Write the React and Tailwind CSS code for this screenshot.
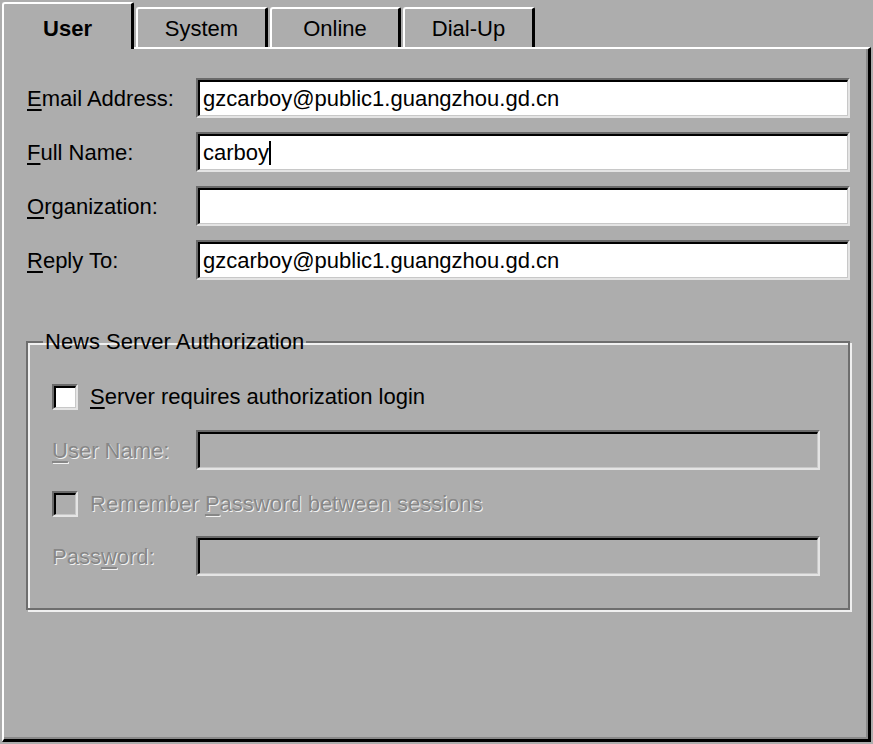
import { useState } from 'react';

const font = { fontFamily: '"Liberation Sans", Arial, sans-serif' };

// Mnemonic: underline one letter of a label
const Mn = ({ text, at = 0 }) => (
    <>
        {text.slice(0, at)}
        <span className="underline underline-offset-[3px] decoration-[1.5px]">{text[at]}</span>
        {text.slice(at + 1)}
    </>
);

const tabs = [
    { name: 'System', w: 'w-[132px]' },
    { name: 'Online', w: 'w-[131px]' },
    { name: 'Dial-Up', w: 'w-[132px]' },
];

const Field = ({ value, disabled, caret, width = 'w-[654px]' }) => (
    <div className={`${width} h-[40px] border-t-2 border-l-2 border-t-[#6a6a6a] border-l-[#6a6a6a] border-b-2 border-r-2 border-b-[#e4e4e4] border-r-[#e4e4e4]`}>
        <div className={`h-full border-t-2 border-l-2 border-t-black border-l-black border-b border-r border-b-[#c8c8c8] border-r-[#c8c8c8] flex items-center px-[3px] text-[22px] text-black ${disabled ? 'bg-[#adadad]' : 'bg-white'}`}>
            {value}
            {caret && <span className="inline-block w-[2px] h-[24px] bg-black" />}
        </div>
    </div>
);

const Check = ({ disabled }) => (
    <div className="w-[26px] h-[26px] shrink-0 border-t-2 border-l-2 border-t-[#6a6a6a] border-l-[#6a6a6a] border-b-2 border-r-2 border-b-[#e4e4e4] border-r-[#e4e4e4]">
        <div className={`h-full border-t-2 border-l-2 border-t-black border-l-black border-b border-r border-b-[#c8c8c8] border-r-[#c8c8c8] ${disabled ? 'bg-[#adadad]' : 'bg-white'}`} />
    </div>
);

const dim = 'text-[#878787] [text-shadow:1px_1px_0_#f2f2f2]';

export default function App() {
    const [needsLogin] = useState(false);

    return (
        <div style={font} className="w-[873px] h-[744px] bg-[#adadad] flex flex-col overflow-hidden select-none">
            {/* tab strip */}
            <div className="h-[47px] flex items-end pl-[2px] shrink-0">
                <div className="relative z-10 -mb-[2px] w-[132px] h-[47px] bg-[#adadad] border-t-2 border-l-2 border-t-white border-l-white border-r-[3px] border-r-black rounded-tl-[3px] rounded-tr-[2px] flex items-start justify-center pt-[8px] text-[22px] font-bold text-black">
                    User
                </div>
                {tabs.map((t) => (
                    <div
                        key={t.name}
                        className={`${t.w} h-[40px] ml-[2px] border-t-2 border-l-2 border-t-white border-l-white border-r-[3px] border-r-black border-b-0 rounded-tl-[3px] rounded-tr-[2px] flex items-center justify-center text-[22px] text-black`}
                    >
                        {t.name}
                    </div>
                ))}
            </div>

            {/* page */}
            <div className="flex-1 ml-[2px] mr-[2px] mb-[2px] border-t-2 border-l-2 border-t-white border-l-white border-r-[3px] border-b-[3px] border-r-black border-b-black shadow-[inset_-2px_-2px_0_#8a8a8a] pt-[29px] pl-[23px] pr-[18px]">
                <div className="flex flex-col gap-[14px] text-[22px] text-black">
                    <div className="flex items-center">
                        <div className="w-[169px]"><Mn text="Email Address:" /></div>
                        <Field value="gzcarboy@public1.guangzhou.gd.cn" />
                    </div>
                    <div className="flex items-center">
                        <div className="w-[169px]"><Mn text="Full Name:" /></div>
                        <Field value="carboy" caret />
                    </div>
                    <div className="flex items-center">
                        <div className="w-[169px]"><Mn text="Organization:" /></div>
                        <Field value="" />
                    </div>
                    <div className="flex items-center">
                        <div className="w-[169px]"><Mn text="Reply To:" /></div>
                        <Field value="gzcarboy@public1.guangzhou.gd.cn" />
                    </div>
                </div>

                {/* News server group */}
                <fieldset className="mt-[45px] -ml-[1px] w-[824px] h-[285px] border-2 border-[#6e6e6e] shadow-[inset_2px_2px_0_#f0f0f0,2px_2px_0_#f0f0f0] pl-[24px] pr-[28px] pt-[22px]">
                    <legend className="-ml-[9px] px-[2px] text-[22px] text-black">News Server Authorization</legend>
                    <div className="flex items-center gap-[12px] text-[22px] text-black">
                        <Check disabled={needsLogin} />
                        <span><Mn text="Server requires authorization login" /></span>
                    </div>
                    <div className={`flex items-center mt-[17px] text-[22px] ${dim}`}>
                        <div className="w-[144px]"><Mn text="User Name:" /></div>
                        <Field value="" disabled width="w-[624px]" />
                    </div>
                    <div className={`flex items-center gap-[12px] mt-[17px] text-[22px] ${dim}`}>
                        <Check disabled />
                        <span>Remember <Mn text="Password" /> between sessions</span>
                    </div>
                    <div className={`flex items-center mt-[16px] text-[22px] ${dim}`}>
                        <div className="w-[144px]"><Mn text="Password:" at={4} /></div>
                        <Field value="" disabled width="w-[624px]" />
                    </div>
                </fieldset>
            </div>
        </div>
    );
}
